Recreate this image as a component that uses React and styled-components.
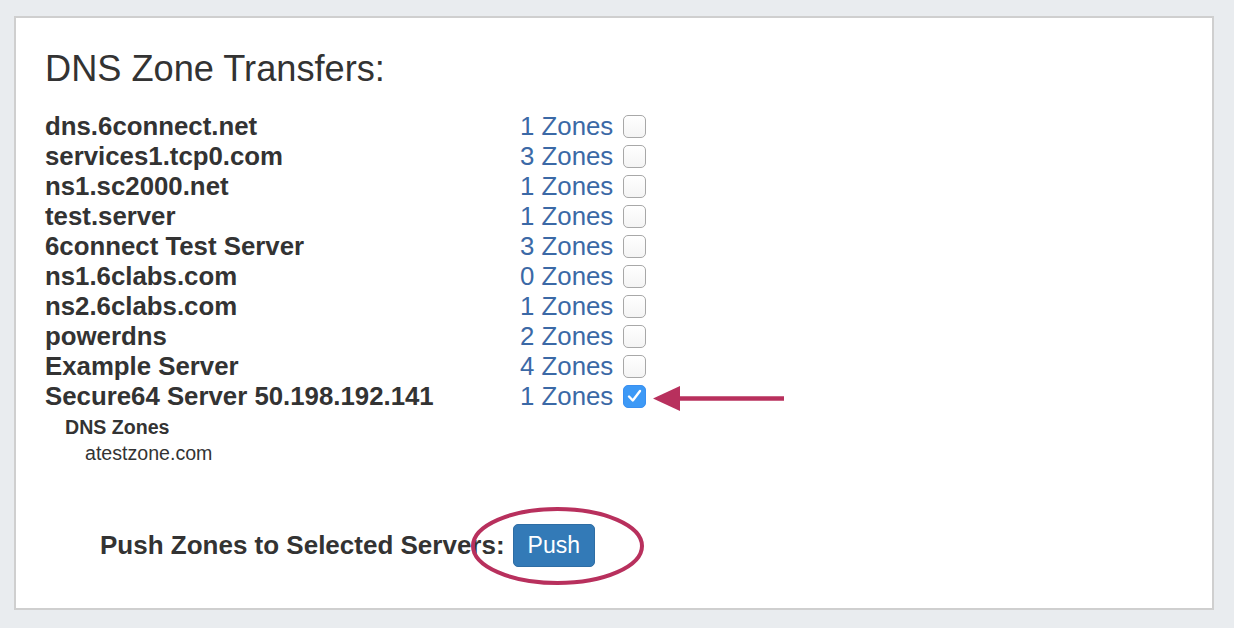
import { Fragment } from "react";
import styled, { createGlobalStyle } from "styled-components";

const GlobalStyle = createGlobalStyle`
  html, body {
    margin: 0;
    padding: 0;
    background: #e9ecef;
  }
  body {
    font-family: "Liberation Sans", Arial, Helvetica, sans-serif;
    color: #333;
  }
`;

const Page = styled.div`
  padding: 16px 0 18px 14px;
`;

const Panel = styled.div`
  box-sizing: border-box;
  width: 1200px;
  min-height: 594px;
  background: #fff;
  border: 2px solid #cfcfcf;
  padding: 31px 28px 30px 29px;
`;

const Title = styled.h3`
  margin: 0 0 22px;
  font-size: 36.2px;
  line-height: 40px;
  font-weight: 400;
  color: #333;
`;

const ServerGrid = styled.div`
  display: grid;
  grid-template-columns: 474px auto;
  grid-auto-rows: 30px;
  align-items: center;
`;

const ServerName = styled.div`
  font-size: 25.8px;
  font-weight: 700;
  line-height: 30px;
  white-space: nowrap;
`;

const ZoneCell = styled.div`
  display: flex;
  align-items: center;
  padding-left: 1px;
`;

const ZoneLink = styled.a`
  font-size: 25.8px;
  line-height: 30px;
  color: #3b69a6;
  text-decoration: none;
  cursor: pointer;
`;

const BoxWrap = styled.span`
  position: relative;
  display: inline-flex;
  margin-left: 10px;
`;

const Box = styled.span`
  box-sizing: border-box;
  width: 23px;
  height: 23px;
  border-radius: 5px;
  display: inline-flex;
  align-items: center;
  justify-content: center;
  border: 1px solid ${(p) => (p.checked ? "#3a8ff0" : "#a8a8a8")};
  background: ${(p) =>
    p.checked ? "#3d99f6" : "linear-gradient(#ffffff, #f4f4f4)"};
`;

const Arrow = styled.svg`
  position: absolute;
  left: 30px;
  top: 1px;
  overflow: visible;
`;

const SubList = styled.div`
  margin-top: 3px;
  padding-left: 20px;
`;

const SubHead = styled.div`
  font-size: 19.6px;
  font-weight: 700;
  line-height: 26px;
`;

const SubItem = styled.div`
  font-size: 19.6px;
  line-height: 26px;
  padding-left: 20px;
`;

const PushRow = styled.div`
  display: flex;
  align-items: center;
  gap: 8px;
  margin-top: 58px;
  padding-left: 55px;
`;

const PushLabel = styled.span`
  font-size: 26px;
  font-weight: 700;
`;

const PushWrap = styled.span`
  position: relative;
  display: inline-flex;
`;

const PushButton = styled.button`
  font-family: inherit;
  font-size: 23px;
  line-height: 33px;
  color: #fff;
  background: #337ab7;
  border: 1px solid #2e6da4;
  border-radius: 5px;
  padding: 4px 14px;
  cursor: pointer;
`;

const Ring = styled.svg`
  position: absolute;
  left: -42px;
  top: -17px;
  overflow: visible;
  pointer-events: none;
`;

const servers = [
  { name: "dns.6connect.net", zones: 1 },
  { name: "services1.tcp0.com", zones: 3 },
  { name: "ns1.sc2000.net", zones: 1 },
  { name: "test.server", zones: 1 },
  { name: "6connect Test Server", zones: 3 },
  { name: "ns1.6clabs.com", zones: 0 },
  { name: "ns2.6clabs.com", zones: 1 },
  { name: "powerdns", zones: 2 },
  { name: "Example Server", zones: 4 },
  { name: "Secure64 Server 50.198.192.141", zones: 1, checked: true },
];

const ACCENT = "#b8305d";

export default function App() {
  return (
    <>
      <GlobalStyle />
      <Page>
        <Panel>
          <Title>DNS Zone Transfers:</Title>
          <ServerGrid>
            {servers.map((s) => (
              <Fragment key={s.name}>
                <ServerName>{s.name}</ServerName>
                <ZoneCell>
                  <ZoneLink>{s.zones} Zones</ZoneLink>
                  <BoxWrap>
                    <Box checked={s.checked}>
                      {s.checked && (
                        <svg width="15" height="14" viewBox="0 0 15 14">
                          <path
                            d="M2 7.5 L5.8 11.5 L13 2"
                            fill="none"
                            stroke="#fff"
                            strokeWidth="2.4"
                            strokeLinecap="round"
                            strokeLinejoin="round"
                          />
                        </svg>
                      )}
                    </Box>
                    {s.checked && (
                      <Arrow width="131" height="25" viewBox="0 0 131 25">
                        <line
                          x1="24"
                          y1="12.5"
                          x2="131"
                          y2="12.5"
                          stroke={ACCENT}
                          strokeWidth="4.5"
                        />
                        <polygon points="0,12.5 27,0 27,25" fill={ACCENT} />
                      </Arrow>
                    )}
                  </BoxWrap>
                </ZoneCell>
              </Fragment>
            ))}
          </ServerGrid>
          <SubList>
            <SubHead>DNS Zones</SubHead>
            <SubItem>atestzone.com</SubItem>
          </SubList>
          <PushRow>
            <PushLabel>Push Zones to Selected Servers:</PushLabel>
            <PushWrap>
              <PushButton>Push</PushButton>
              <Ring width="173" height="78" viewBox="0 0 173 78">
                <ellipse
                  cx="86.5"
                  cy="39"
                  rx="84.5"
                  ry="37"
                  fill="none"
                  stroke={ACCENT}
                  strokeWidth="4"
                />
              </Ring>
            </PushWrap>
          </PushRow>
        </Panel>
      </Page>
    </>
  );
}
